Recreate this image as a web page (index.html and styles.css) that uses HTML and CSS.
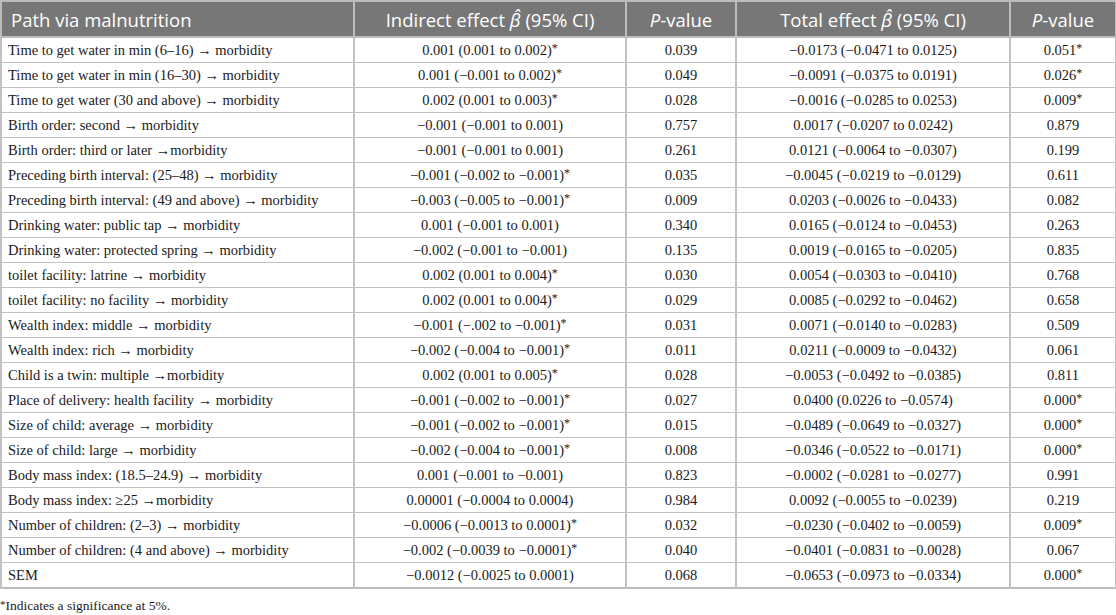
FILE: index.html
```html
<!DOCTYPE html>
<html>
<head>
<meta charset="utf-8">
<link rel="stylesheet" href="styles.css">
</head>
<body>
<table class="tbl">
<colgroup>
<col class="c1"><col class="c2"><col class="c3"><col class="c4"><col class="c5">
</colgroup>
<thead>
<tr>
<th class="left">Path via malnutrition</th>
<th>Indirect effect <i class="beta">β̂</i> (95% CI)</th>
<th><i>P</i>-value</th>
<th>Total effect <i class="beta">β̂</i> (95% CI)</th>
<th><i>P</i>-value</th>
</tr>
</thead>
<tbody>
<tr><td>Time to get water in min (6–16) → morbidity</td><td>0.001 (0.001 to 0.002)<sup>*</sup></td><td>0.039</td><td>−0.0173 (−0.0471 to 0.0125)</td><td>0.051<sup>*</sup></td></tr>
<tr><td>Time to get water in min (16–30) → morbidity</td><td>0.001 (−0.001 to 0.002)<sup>*</sup></td><td>0.049</td><td>−0.0091 (−0.0375 to 0.0191)</td><td>0.026<sup>*</sup></td></tr>
<tr><td>Time to get water (30 and above) → morbidity</td><td>0.002 (0.001 to 0.003)<sup>*</sup></td><td>0.028</td><td>−0.0016 (−0.0285 to 0.0253)</td><td>0.009<sup>*</sup></td></tr>
<tr><td>Birth order: second → morbidity</td><td>−0.001 (−0.001 to 0.001)</td><td>0.757</td><td>0.0017 (−0.0207 to 0.0242)</td><td>0.879</td></tr>
<tr><td>Birth order: third or later →morbidity</td><td>−0.001 (−0.001 to 0.001)</td><td>0.261</td><td>0.0121 (−0.0064 to −0.0307)</td><td>0.199</td></tr>
<tr><td>Preceding birth interval: (25–48) → morbidity</td><td>−0.001 (−0.002 to −0.001)<sup>*</sup></td><td>0.035</td><td>−0.0045 (−0.0219 to −0.0129)</td><td>0.611</td></tr>
<tr><td>Preceding birth interval: (49 and above) → morbidity</td><td>−0.003 (−0.005 to −0.001)<sup>*</sup></td><td>0.009</td><td>0.0203 (−0.0026 to −0.0433)</td><td>0.082</td></tr>
<tr><td>Drinking water: public tap → morbidity</td><td>0.001 (−0.001 to 0.001)</td><td>0.340</td><td>0.0165 (−0.0124 to −0.0453)</td><td>0.263</td></tr>
<tr><td>Drinking water: protected spring → morbidity</td><td>−0.002 (−0.001 to −0.001)</td><td>0.135</td><td>0.0019 (−0.0165 to −0.0205)</td><td>0.835</td></tr>
<tr><td>toilet facility: latrine → morbidity</td><td>0.002 (0.001 to 0.004)<sup>*</sup></td><td>0.030</td><td>0.0054 (−0.0303 to −0.0410)</td><td>0.768</td></tr>
<tr><td>toilet facility: no facility → morbidity</td><td>0.002 (0.001 to 0.004)<sup>*</sup></td><td>0.029</td><td>0.0085 (−0.0292 to −0.0462)</td><td>0.658</td></tr>
<tr><td>Wealth index: middle → morbidity</td><td>−0.001 (−.002 to −0.001)<sup>*</sup></td><td>0.031</td><td>0.0071 (−0.0140 to −0.0283)</td><td>0.509</td></tr>
<tr><td>Wealth index: rich → morbidity</td><td>−0.002 (−0.004 to −0.001)<sup>*</sup></td><td>0.011</td><td>0.0211 (−0.0009 to −0.0432)</td><td>0.061</td></tr>
<tr><td>Child is a twin: multiple →morbidity</td><td>0.002 (0.001 to 0.005)<sup>*</sup></td><td>0.028</td><td>−0.0053 (−0.0492 to −0.0385)</td><td>0.811</td></tr>
<tr><td>Place of delivery: health facility → morbidity</td><td>−0.001 (−0.002 to −0.001)<sup>*</sup></td><td>0.027</td><td>0.0400 (0.0226 to −0.0574)</td><td>0.000<sup>*</sup></td></tr>
<tr><td>Size of child: average → morbidity</td><td>−0.001 (−0.002 to −0.001)<sup>*</sup></td><td>0.015</td><td>−0.0489 (−0.0649 to −0.0327)</td><td>0.000<sup>*</sup></td></tr>
<tr><td>Size of child: large → morbidity</td><td>−0.002 (−0.004 to −0.001)<sup>*</sup></td><td>0.008</td><td>−0.0346 (−0.0522 to −0.0171)</td><td>0.000<sup>*</sup></td></tr>
<tr><td>Body mass index: (18.5–24.9) → morbidity</td><td>0.001 (−0.001 to −0.001)</td><td>0.823</td><td>−0.0002 (−0.0281 to −0.0277)</td><td>0.991</td></tr>
<tr><td>Body mass index: ≥25 →morbidity</td><td>0.00001 (−0.0004 to 0.0004)</td><td>0.984</td><td>0.0092 (−0.0055 to −0.0239)</td><td>0.219</td></tr>
<tr><td>Number of children: (2–3) → morbidity</td><td>−0.0006 (−0.0013 to 0.0001)<sup>*</sup></td><td>0.032</td><td>−0.0230 (−0.0402 to −0.0059)</td><td>0.009<sup>*</sup></td></tr>
<tr><td>Number of children: (4 and above) → morbidity</td><td>−0.002 (−0.0039 to −0.0001)<sup>*</sup></td><td>0.040</td><td>−0.0401 (−0.0831 to −0.0028)</td><td>0.067</td></tr>
<tr><td>SEM</td><td>−0.0012 (−0.0025 to 0.0001)</td><td>0.068</td><td>−0.0653 (−0.0973 to −0.0334)</td><td>0.000<sup>*</sup></td></tr>
</tbody>
</table>
<p class="note"><sup>*</sup>Indicates a significance at 5%.</p>
</body>
</html>
```
FILE: styles.css
```css
html, body {
  margin: 0;
  padding: 0;
  background: #ffffff;
}
.tbl {
  border-collapse: collapse;
  table-layout: fixed;
  width: 1115px;
  font-family: "Liberation Serif", "Times New Roman", serif;
  font-size: 14.5px;
  color: #1a1a1a;
  border: 2px solid #bcbcbc;
}
.c1 { width: 353px; }
.c2 { width: 272px; }
.c3 { width: 110px; }
.c4 { width: 274px; }
.c5 { width: 106px; }
.tbl th {
  background: #777777;
  color: #ffffff;
  font-family: "Open Sans", "Noto Sans", sans-serif;
  font-weight: 400;
  font-size: 18.5px;
  height: 34px;
  padding: 0 8px;
  text-align: center;
  border: 2px solid #bcbcbc;
  white-space: nowrap;
}
.tbl th.left {
  text-align: left;
  padding-left: 9px;
}
.beta {
  font-style: italic;
}
.tbl td {
  height: 24px;
  padding: 0 6px;
  text-align: center;
  border: 1.5px solid #c2c2c2;
  border-left-width: 2px;
  border-right-width: 2px;
  white-space: nowrap;
  line-height: 18px;
}
.tbl td:first-child {
  text-align: left;
}
.tbl sup {
  font-size: 12px;
  line-height: 0;
  vertical-align: 3px;
}
.note {
  margin: 9px 0 0 0;
  font-family: "Liberation Serif", "Times New Roman", serif;
  font-size: 13.5px;
  color: #1a1a1a;
}
.note sup {
  font-size: 11px;
  line-height: 0;
  vertical-align: 2px;
}
```
